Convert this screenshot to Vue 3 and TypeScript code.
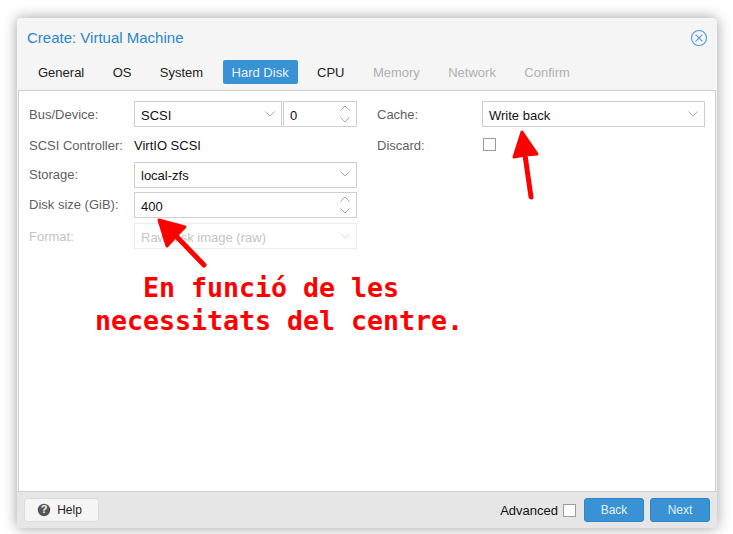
<script setup lang="ts">
const tabs = ['General', 'OS', 'System', 'Hard Disk', 'CPU', 'Memory', 'Network', 'Confirm']
const activeTab = 'Hard Disk'
const disabledTabs = ['Memory', 'Network', 'Confirm']
</script>

<template>
  <div class="page">
    <div class="window">
      <!-- capçalera -->
      <div class="header">
        <span class="title">Create: Virtual Machine</span>
        <svg class="close" width="18" height="18" viewBox="0 0 18 18">
          <circle cx="9" cy="9" r="7.5" fill="none" stroke="#4b9bd5" stroke-width="1.1" />
          <path d="M5.6 5.6 12.4 12.4M12.4 5.6 5.6 12.4" stroke="#4b9bd5" stroke-width="1.1" />
        </svg>
      </div>

      <div class="tabs">
        <div
          v-for="tab in tabs"
          :key="tab"
          class="tab"
          :class="{ active: tab === activeTab, disabled: disabledTabs.includes(tab) }"
        >{{ tab }}</div>
      </div>

      <div class="content">
        <div class="column">
          <div class="row">
            <label>Bus/Device:</label>
            <div class="pair">
              <div class="field grow">
                <span>SCSI</span>
                <svg class="chevron" width="10" height="6" viewBox="0 0 10 6"><path d="M.5.5 5 5 9.5.5" /></svg>
              </div>
              <div class="field spin">
                <span class="small">0</span>
                <svg class="spinner" width="10" height="18" viewBox="0 0 10 18"><path d="M.5 5.5 5 1 9.5 5.5M.5 12.5 5 17 9.5 12.5" /></svg>
              </div>
            </div>
          </div>
          <div class="row text-row">
            <label>SCSI Controller:</label>
            <span class="value">VirtIO SCSI</span>
          </div>
          <div class="row">
            <label>Storage:</label>
            <div class="field">
              <span>local-zfs</span>
              <svg class="chevron" width="10" height="6" viewBox="0 0 10 6"><path d="M.5.5 5 5 9.5.5" /></svg>
            </div>
          </div>
          <div class="row size-row">
            <label>Disk size (GiB):</label>
            <div class="field">
              <span class="small">400</span>
              <svg class="spinner" width="10" height="18" viewBox="0 0 10 18"><path d="M.5 5.5 5 1 9.5 5.5M.5 12.5 5 17 9.5 12.5" /></svg>
            </div>
          </div>
          <div class="row off">
            <label>Format:</label>
            <div class="field">
              <span>Raw disk image (raw)</span>
              <svg class="chevron" width="10" height="6" viewBox="0 0 10 6"><path d="M.5.5 5 5 9.5.5" /></svg>
            </div>
          </div>
        </div>

        <div class="column">
          <div class="row">
            <label>Cache:</label>
            <div class="field">
              <span>Write back</span>
              <svg class="chevron" width="10" height="6" viewBox="0 0 10 6"><path d="M.5.5 5 5 9.5.5" /></svg>
            </div>
          </div>
          <div class="row text-row">
            <label>Discard:</label>
            <div class="check discard"></div>
          </div>
        </div>
      </div>

      <div class="footer">
        <button class="btn help">
          <svg width="14" height="14" viewBox="0 0 14 14"><circle cx="7" cy="7" r="6.2" fill="#555" /></svg>
          <span class="qmark">?</span>
          Help
        </button>
        <div class="spacer"></div>
        <span class="advanced">Advanced</span>
        <div class="check adv"></div>
        <button class="btn primary">Back</button>
        <button class="btn primary">Next</button>
      </div>
    </div>

    <!-- anotacions damunt de la captura -->
    <div class="note">
      <div>En funció de les </div>
      <div>necessitats del centre.</div>
    </div>
    <svg class="arrows" width="733" height="534" viewBox="0 0 733 534">
      <g fill="#ff0000" stroke="#ff0000" stroke-width="3" stroke-linejoin="round" stroke-linecap="round">
        <path d="M522 132 514 157 525 155 537 154Z" />
        <path d="M525 155 531 197" fill="none" stroke-width="5" />
        <path d="M159 220 167 246 176 236 185 227Z" />
        <path d="M176 236 204 265" fill="none" stroke-width="5" />
      </g>
    </svg>
  </div>
</template>

<style scoped>
.page {
  position: relative;
  width: 733px;
  height: 534px;
  overflow: hidden;
  background: #fff;
  font-family: "Liberation Sans", Arial, sans-serif;
  font-size: 13px;
  color: #000;
  padding: 18px 16px 6px 17px;
  box-sizing: border-box;
}

.window {
  height: 510px;
  display: flex;
  flex-direction: column;
  background: #f5f5f5;
  border-radius: 4px;
  box-shadow: 0 0 14px rgba(0, 0, 0, 0.38);
  overflow: hidden;
}

.header {
  height: 42px;
  display: flex;
  align-items: center;
  justify-content: space-between;
  padding: 0 9px 4px 10px;
  flex: none;
  box-sizing: border-box;
}

.title {
  font-size: 15px;
  color: #2a86c9;
}

.close {
  margin-top: 1px;
}

.tabs {
  height: 30px;
  flex: none;
  display: flex;
  gap: 10.4px;
  padding-left: 12px;
  box-sizing: border-box;
}

.tab {
  height: 24px;
  line-height: 26px;
  padding: 0 9px;
  border-radius: 2px;
  color: #222;
}

.tab.active {
  background: #3892d4;
  color: #e8f3fb;
}

.tab.disabled {
  color: #b0b0b0;
}

.content {
  flex: 1;
  margin: 0 1px;
  background: #fff;
  border: 1px solid #cfcfcf;
  border-bottom: 0;
  display: grid;
  grid-template-columns: 328px 328px;
  column-gap: 20px;
  padding: 10px 0 0 10px;
  box-sizing: border-box;
}

.row {
  display: flex;
  align-items: center;
  height: 26px;
  margin-bottom: 4.25px;
}

.text-row {
  padding-top: 2px;
  box-sizing: border-box;
}

.size-row {
  margin-bottom: 5.5px;
}

.row label {
  width: 105px;
  flex: none;
  color: #5f5f5f;
}

.pair {
  flex: 1;
  display: flex;
  gap: 1px;
}

.field {
  flex: 1;
  height: 26px;
  box-sizing: border-box;
  border: 1px solid #cfcfcf;
  display: flex;
  align-items: center;
  justify-content: space-between;
  padding: 2px 6px 0 6px;
  color: #111;
}

.chevron,
.spinner {
  margin-top: -3px;
  fill: none;
  stroke: #aaa;
  stroke-width: 1;
}

.spinner {
  margin-top: -2px;
}

.grow {
  flex: none;
  width: 148px;
}

.spin {
  flex: none;
  width: 74px;
}

.small {
  font-size: 13px;
  padding-top: 1px;
}

.value {
  color: #111;
}

.off label,
.off .field {
  color: #c4c4c4;
}

.off .field {
  border-color: #ececec;
}

.off .chevron {
  stroke: #dcdcdc;
}

.check {
  width: 13px;
  height: 13px;
  margin-left: 1px;
  border: 1px solid #9c9c9c;
  background: #fff;
  box-sizing: border-box;
}

.discard {
  margin-top: -2px;
}

.footer {
  height: 37px;
  flex: none;
  background: #e6e6e6;
  border-top: 1px solid #cfcfcf;
  display: flex;
  align-items: center;
  padding: 0 7px;
  box-sizing: border-box;
}

.spacer {
  flex: 1;
}

.btn {
  height: 24px;
  box-sizing: border-box;
  font-family: inherit;
  font-size: 12px;
  border-radius: 3px;
  padding: 0;
  position: relative;
}

.help {
  width: 75px;
  background: #f5f5f5;
  border: 1px solid #dcdcdc;
  color: #222;
  display: flex;
  align-items: center;
  padding-right: 4px;
  justify-content: center;
  gap: 6px;
}

.qmark {
  position: absolute;
  left: 12px;
  top: 4px;
  width: 14px;
  text-align: center;
  font-size: 11px;
  font-weight: bold;
  color: #f5f5f5;
}

.advanced {
  font-size: 13px;
  color: #111;
  margin-right: 4px;
}

.adv {
  margin: 0 8px 0 1px;
}

.primary {
  width: 60px;
  background: #3892d4;
  border: 1px solid #2f85c5;
  color: #e4f0fa;
}

.primary + .primary {
  margin-left: 6px;
}

.note {
  position: absolute;
  left: 79px;
  top: 271px;
  width: 400px;
  text-align: center;
  white-space: pre;
  font-family: "DejaVu Sans Mono", monospace;
  font-weight: bold;
  font-size: 26.6px;
  line-height: 33px;
  color: #ff0000;
}

.arrows {
  position: absolute;
  left: 0;
  top: 0;
  pointer-events: none;
}
</style>
